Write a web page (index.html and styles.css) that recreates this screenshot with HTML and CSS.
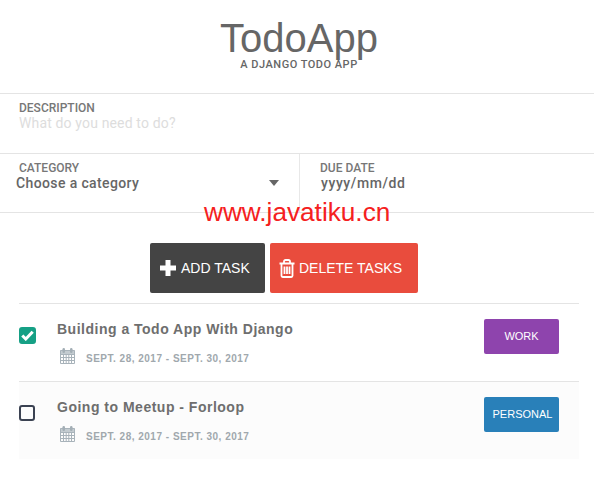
FILE: index.html
```html
<!doctype html>
<html lang="en">
<head>
    <meta charset="UTF-8">
    <title>TodoApp</title>
    <link rel="stylesheet" href="styles.css">
</head>
<body>
    <div class="header">
        <h1>TodoApp</h1>
        <p>A DJANGO TODO APP</p>
    </div>
    <div class="field-row">
        <div class="field">
            <label>DESCRIPTION</label>
            <div class="placeholder">What do you need to do?</div>
        </div>
    </div>
    <div class="field-row split">
        <div class="field category">
            <label>CATEGORY</label>
            <div class="select">Choose a category<span class="arrow"></span></div>
        </div>
        <div class="field due">
            <label>DUE DATE</label>
            <div class="value">yyyy/mm/dd</div>
        </div>
    </div>
    <div class="actions">
        <div class="btn btn-add">
            <svg class="ico-plus" viewBox="0 0 16 16"><path d="M5.500 0h5v5.500H16v5h-5.500V16h-5v-5.500H0v-5h5.500z"/></svg>
            ADD TASK
        </div>
        <div class="btn btn-del">
            <svg class="ico-trash" viewBox="0 0 16 19"><path d="M.500 4.500h15M5 4.200V2.600Q5 1 6.600 1h2.800Q11 1 11 2.600v1.600M2.500 4.500v12.300q0 1.200 1.200 1.200h8.600q1.200 0 1.200-1.200V4.500M5.500 7.500v7.500M8 7.500v7.500M10.500 7.500v7.500"/></svg>
            DELETE TASKS
        </div>
    </div>
    <ul class="list">
        <li class="item">
            <span class="check on"><svg viewBox="0 0 12 10"><path d="M1.200 5l3.200 3.200 6.400-6.700"/></svg></span>
            <div class="info">
                <div class="name">Building a Todo App With Django</div>
                <div class="date">
                    <svg class="cal" viewBox="0 0 15 16"><use href="#cal"/></svg>
                    <span>SEPT. 28, 2017 - SEPT. 30, 2017</span>
                </div>
            </div>
            <span class="tag work">WORK</span>
        </li>
        <li class="item alt">
            <span class="check"></span>
            <div class="info">
                <div class="name">Going to Meetup - Forloop</div>
                <div class="date">
                    <svg class="cal" viewBox="0 0 15 16"><use href="#cal"/></svg>
                    <span>SEPT. 28, 2017 - SEPT. 30, 2017</span>
                </div>
            </div>
            <span class="tag personal">PERSONAL</span>
        </li>
    </ul>
    <div class="mark">www.javatiku.cn</div>
    <svg class="defs" width="0" height="0">
        <symbol id="cal" viewBox="0 0 15 16">
            <path d="M0 2.500h15v4H0z" fill="#c3cbd0"/>
            <path d="M.500 2.500h14v13H.500zM.500 6.500h14M.500 9.500h14M.500 12.500h14M3.500 6.500v9M6.200 6.500v9M8.800 6.500v9M11.500 6.500v9" fill="none" stroke="#a8b3ba"/>
            <rect x="2.500" y="0" width="2.500" height="5" rx="1.200" fill="#a3aeb5"/>
            <rect x="10" y="0" width="2.500" height="5" rx="1.200" fill="#a3aeb5"/>
        </symbol>
    </svg>
</body>
</html>
```

FILE: styles.css
```css
*{
    margin:0;
    padding:0;
    box-sizing:border-box;
}
body{
    font-family:"Liberation Sans",Arial,sans-serif;
    color:#666;
    background:#fff;
    position:relative;
}
ul{
    list-style:none;
}
.header{
    height:94px;
    padding:15px 0 0 4px;
    text-align:center;
    border-bottom:1px solid #e4e4e4;
}
.header h1{
    font-size:40px;
    font-weight:normal;
    line-height:46px;
}
.header p{
    font-family:Roboto,sans-serif;
    font-size:11px;
    font-weight:500;
    letter-spacing:.5px;
    line-height:13px;
    margin-top:-3px;
}
.field-row{
    height:60px;
    border-bottom:1px solid #e4e4e4;
    display:flex;
}
.split{
    height:59px;
}
.field{
    padding:7px 19px 0;
    font-family:Roboto,sans-serif;
}
.field label{
    display:block;
    font-size:12px;
    font-weight:500;
    line-height:14px;
    color:#777;
}
.placeholder{
    font-size:14px;
    letter-spacing:.15px;
    line-height:20px;
    margin-top:-2px;
    color:#ddd;
}
.category{
    width:300px;
    border-right:1px solid #e8e8e8;
}
.due{
    padding-left:20px;
}
.select{
    position:relative;
    margin:-2px 0 0 -3px;
    font-size:14px;
    font-weight:500;
    letter-spacing:.38px;
    line-height:20px;
}
.value{
    margin:-2px 0 0 1px;
    font-size:14px;
    font-weight:500;
    letter-spacing:.6px;
    line-height:20px;
    color:#666;
}
.arrow{
    position:absolute;
    right:1px;
    top:7px;
    border:5px solid transparent;
    border-top:6px solid #666;
    border-bottom:0;
}
.actions{
    display:flex;
    justify-content:center;
    gap:5px;
    margin-top:30px;
    padding-right:26px;
}
.btn{
    height:50px;
    display:flex;
    align-items:center;
    border-radius:2px;
    color:#fff;
    font-size:14px;
}
.btn-add{
    width:115px;
    padding-left:10px;
    background:#444;
}
.btn-del{
    width:148px;
    padding-left:9px;
    background:#e94c3d;
}
.ico-plus{
    width:16px;
    height:16px;
    fill:#fff;
    margin-right:5px;
}
.ico-trash{
    width:16px;
    height:19px;
    fill:none;
    stroke:#fff;
    stroke-width:1.800;
    margin-right:4px;
}
.list{
    margin:10px 15px 0 19px;
    border-top:1px solid #e4e4e4;
}
.item{
    height:78px;
    display:flex;
    padding-top:15px;
    border-bottom:1px solid #e4e4e4;
}
.item.alt{
    height:77px;
    background:#fcfcfc;
    border-bottom:0;
}
.check{
    width:16px;
    height:16px;
    margin:8px 1px 0 0;
    border:2px solid #3b4252;
    border-radius:3px;
    display:flex;
    align-items:center;
    justify-content:center;
}
.check.on{
    width:17px;
    height:17px;
    margin-right:0;
    background:#16a085;
    border-color:#16a085;
}
.check svg{
    flex:none;
    width:13px;
    height:11px;
    fill:none;
    stroke:#fff;
    stroke-width:2.800;
}
.info{
    flex:1;
    margin-left:21px;
}
.name{
    font-size:14px;
    font-weight:bold;
    letter-spacing:.5px;
    line-height:20px;
    color:#6e6e6e;
}
.date{
    display:flex;
    align-items:center;
    margin-top:9px;
    font-size:10px;
    font-weight:bold;
    letter-spacing:.5px;
    color:#a0a8ad;
}
.date span{
    margin-top:5px;
}
.cal{
    width:15px;
    height:16px;
    margin:0 11px 0 3px;
}
.tag{
    width:75px;
    height:35px;
    margin:0 20px 0 0;
    border-radius:2px;
    color:#fff;
    font-size:11px;
    display:flex;
    align-items:center;
    justify-content:center;
    padding-bottom:2px;
}
.work{
    background:#8e44ad;
}
.personal{
    background:#2980b9;
    padding-left:2px;
}
.mark{
    position:absolute;
    left:204px;
    top:197px;
    font-size:26.200px;
    line-height:30px;
    color:#f52020;
}
.defs{
    position:absolute;
}
```
